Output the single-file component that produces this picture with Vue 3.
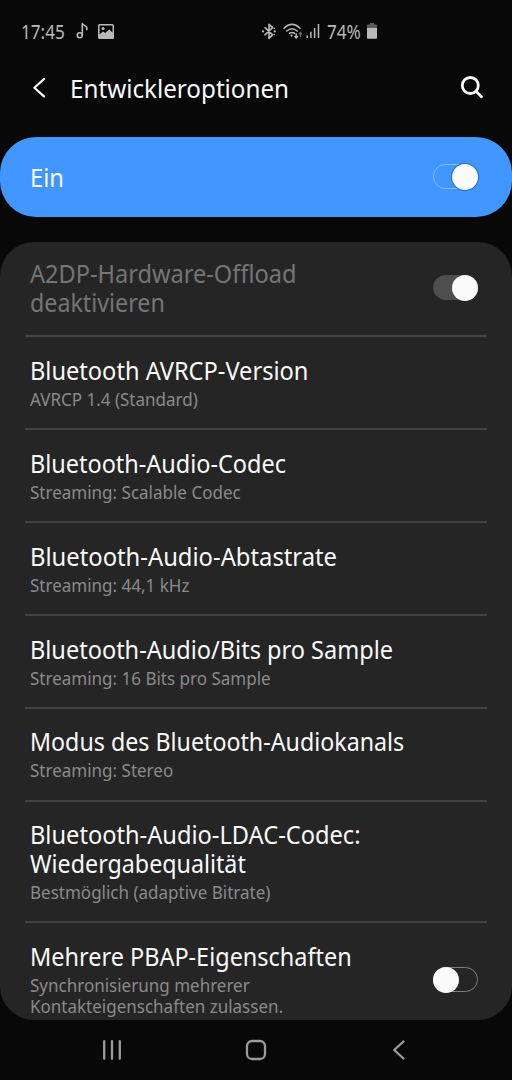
<script setup>
import { ref } from 'vue'

const enabled = ref(true)

// w: horizontal scale of each title line
const rows = ref([
  { title: ['A2DP-Hardware-Offload', 'deaktivieren'], w: [0.942, 0.93], toggle: true, on: true, disabled: true },
  { title: ['Bluetooth AVRCP-Version'], w: [0.944], sub: ['AVRCP 1.4 (Standard)'] },
  { title: ['Bluetooth-Audio-Codec'], w: [0.938], sub: ['Streaming: Scalable Codec'] },
  { title: ['Bluetooth-Audio-Abtastrate'], w: [0.951], sub: ['Streaming: 44,1 kHz'] },
  { title: ['Bluetooth-Audio/Bits pro Sample'], w: [0.941], sub: ['Streaming: 16 Bits pro Sample'] },
  { title: ['Modus des Bluetooth-Audiokanals'], w: [0.929], sub: ['Streaming: Stereo'] },
  { title: ['Bluetooth-Audio-LDAC-Codec:', 'Wiedergabequalität'], w: [0.945, 0.93], sub: ['Bestmöglich (adaptive Bitrate)'] },
  {
    title: ['Mehrere PBAP-Eigenschaften'],
    w: [0.938],
    sub: ['Synchronisierung mehrerer', 'Kontakteigenschaften zulassen.'],
    toggle: true,
    on: false,
  },
])

function flip(row) {
  if (row.toggle && !row.disabled) row.on = !row.on
}
</script>

<template>
  <div class="screen">
    <div class="statusbar">
      <span class="clock"><span class="narrow">17:45</span></span>
      <svg class="ic-note" width="14" height="18" viewBox="0 0 14 18">
        <circle cx="3.8" cy="13.2" r="2.5" />
        <path d="M6.3 13.2V1.5C7.5 4.2 12 3.4 10.8 7.6" />
      </svg>
      <svg class="ic-image" width="16" height="15" viewBox="0 0 16 15">
        <path fill-rule="evenodd" d="M1.6 0h12.8Q16 0 16 1.600v11.800q0 1.600-1.600 1.600H1.600Q0 15 0 13.400V1.600Q0 0 1.600 0ZM1.500 1.500v8.700l3.600-2.700 2.100 1.600 4.100-3.700 3.200 3.300V1.500Z" />
        <circle cx="5" cy="4.6" r="1.5" />
      </svg>
      <span class="spacer"></span>
      <svg class="ic-bt" width="14" height="17" viewBox="0 0 14 17">
        <path d="M3 4.7l7.6 7.2L7 15.4V1.3l3.6 3.4L3 11.9" />
        <circle cx="1.1" cy="8.4" r="1.1" />
        <circle cx="12.8" cy="8.4" r="1.1" />
        <circle cx="12.2" cy="5.2" r=".8" />
        <circle cx="12.2" cy="11.6" r=".8" />
      </svg>
      <svg class="ic-wifi" width="20" height="17" viewBox="0 0 20 17">
        <path d="M1 5.2Q9-2.600 17 5.200M3.800 8Q9 3.400 14.200 8M6.400 10.400Q9 8.400 11.600 10.400" />
        <circle cx="8.6" cy="12.6" r="1.1" />
        <path class="down" d="M13.2 11v3.600M12 13.500l1.200 1.400 1.200-1.400" />
        <path class="up" d="M17.4 13.500V10M16.400 10.800l1-1.200 1 1.200" />
      </svg>
      <svg class="ic-signal" width="14" height="14" viewBox="0 0 14 14">
        <path d="M1.200 11.500V14M4.900 7.700V14M8.600 4V14M12.500 0V14" />
      </svg>
      <span class="percent"><span class="narrow">74%</span></span>
      <svg class="ic-battery" width="10" height="16" viewBox="0 0 10 16">
        <path class="dim" d="M3 0h4v1.500h2.200Q10 1.500 10 2.300V5H0V2.300Q0 1.500.8 1.500H3Z" />
        <path d="M0 5h10v10q0 .8-.8.8H.8Q0 15.800 0 15Z" />
      </svg>
    </div>

    <header class="appbar">
      <svg class="back" width="14" height="20" viewBox="0 0 14 20">
        <path d="M12 1L2.400 9.700l9.600 8.700" />
      </svg>
      <h1><span>Entwickleroptionen</span></h1>
      <svg class="search" width="24" height="24" viewBox="0 0 24 24">
        <circle cx="10.300" cy="9.500" r="8" />
        <path d="M16 15.200l5.500 5.500" />
      </svg>
    </header>

    <section class="master" @click="enabled = !enabled">
      <span class="label">Ein</span>
      <span class="switch blue" :class="{ on: enabled }"><i></i></span>
    </section>

    <main class="list">
      <div
        v-for="(row, i) in rows"
        :key="i"
        class="row"
        :class="{ disabled: row.disabled }"
        @click="flip(row)"
      >
        <div class="text">
          <div
            v-for="(line, n) in row.title"
            :key="line"
            class="title"
            :style="{ transform: `scaleX(${row.w[n]})` }"
          >{{ line }}</div>
          <div v-if="row.sub" class="subs">
            <div v-for="line in row.sub" :key="line" class="sub">{{ line }}</div>
          </div>
        </div>
        <span v-if="row.toggle" class="switch" :class="{ on: row.on }"><i></i></span>
      </div>
    </main>

    <nav class="navbar">
      <svg width="20" height="20" viewBox="0 0 20 20">
        <path d="M2.200 1.200v17.600M10 1.200v17.600M17.800 1.200v17.600" />
      </svg>
      <svg width="22" height="22" viewBox="0 0 22 22">
        <rect x="2" y="2" width="18" height="18" rx="5" />
      </svg>
      <svg width="14" height="20" viewBox="0 0 14 20">
        <path d="M11.500 1.500L2.200 10l9.300 8.500" />
      </svg>
    </nav>
  </div>
</template>

<style>
body {
  margin: 0;
  background: #080808;
}
</style>

<style scoped>
.screen {
  display: flex;
  flex-direction: column;
  width: 512px;
  height: 1080px;
  overflow: hidden;
  background: #080808;
  color: #fafafa;
  font-family: "Noto Sans", sans-serif;
}

svg {
  flex: none;
  fill: none;
  stroke-linecap: round;
  stroke-linejoin: round;
}

.statusbar {
  display: flex;
  align-items: center;
  height: 62px;
  padding: 0 135px 0 21px;
  box-sizing: border-box;
  color: #b9b9b9;
  font-size: 19px;
}

.narrow {
  display: inline-block;
  margin-top: 2px;
  transform: scaleX(0.9);
  transform-origin: left;
}

.statusbar svg {
  fill: #b9b9b9;
}

.statusbar .ic-note,
.statusbar .ic-bt {
  fill: none;
  stroke: #b9b9b9;
  stroke-width: 1.6;
}

.statusbar .ic-bt circle {
  fill: #b9b9b9;
  stroke: none;
}

.statusbar .ic-wifi path,
.statusbar .ic-signal path {
  fill: none;
  stroke: #b9b9b9;
  stroke-width: 1.5;
}

.statusbar .ic-signal path {
  stroke-linecap: butt;
}

.statusbar .ic-wifi .up {
  stroke: #666;
}

.statusbar .dim {
  fill: #5c5c5c;
}

.clock {
  width: 55px;
}

.ic-image {
  margin-left: 8px;
}

.spacer {
  flex: 1;
}

.ic-wifi {
  margin-left: 7px;
}

.ic-signal {
  margin: 0 7px 0 3px;
}

.percent {
  width: 40px;
}

.appbar {
  display: flex;
  align-items: center;
  height: 52px;
  padding: 0 28px 0 32px;
}

.appbar svg {
  stroke: #fafafa;
  stroke-width: 2.2;
}

.appbar .search {
  stroke-width: 2.8;
}

.appbar h1 {
  flex: 1;
  margin: 0 0 0 24px;
  font-size: 25px;
  font-weight: 400;
  line-height: 32px;
}

.appbar h1 span {
  display: inline-block;
  transform: scaleX(0.968);
  transform-origin: left;
}

.master {
  display: flex;
  flex: none;
  align-items: center;
  justify-content: space-between;
  height: 79.5px;
  margin: 23px 0 25px;
  padding: 0 34px 0 30px;
  box-sizing: border-box;
  border-radius: 36px;
  background: #4296ff;
  font-size: 25px;
}

.label {
  transform: scaleX(0.95);
  transform-origin: left;
}

.list {
  flex: none;
  height: 778.5px;
  overflow: hidden;
  border-radius: 34px;
  background: #252525;
}

.row {
  display: flex;
  align-items: center;
  justify-content: space-between;
  margin: 0 25px;
  padding: 18.7px 9px 18.2px 5px;
  border-top: 2px solid #424242;
}

.row:first-child {
  padding: 17px 9px 18.7px 5px;
  border-top: 0;
}

.title {
  height: 29px;
  font-size: 25px;
  line-height: 29px;
  white-space: nowrap;
  transform-origin: left;
}

.subs {
  padding-top: 4px;
}

.sub {
  height: 21px;
  color: #8a8a8a;
  font-size: 18px;
  line-height: 21px;
  white-space: nowrap;
  transform: scaleX(0.945);
  transform-origin: left;
}

.disabled .title {
  color: #757575;
}

.switch {
  position: relative;
  flex: none;
  width: 45px;
  height: 25px;
  box-sizing: border-box;
  border: 1px solid #808080;
  border-radius: 13px;
}

.switch i {
  position: absolute;
  top: -1.5px;
  left: -1.5px;
  width: 26px;
  height: 26px;
  border-radius: 50%;
  background: #fafafa;
}

.switch.on i {
  right: -1px;
  left: auto;
}

.switch.blue {
  border-color: #85bcff;
}

.switch.blue i {
  box-shadow: 0 0 0 1px #1f6fc4;
}

.disabled .switch {
  border-color: #4e4e4e;
  background: #4e4e4e;
}

.navbar {
  display: flex;
  flex: 1;
  align-items: center;
  justify-content: space-between;
  padding: 0 106px 0 102px;
}

.navbar svg {
  stroke: #9c9c9c;
  stroke-width: 2.3;
}

.navbar svg:nth-child(2) {
  margin-right: 3px;
}
</style>
